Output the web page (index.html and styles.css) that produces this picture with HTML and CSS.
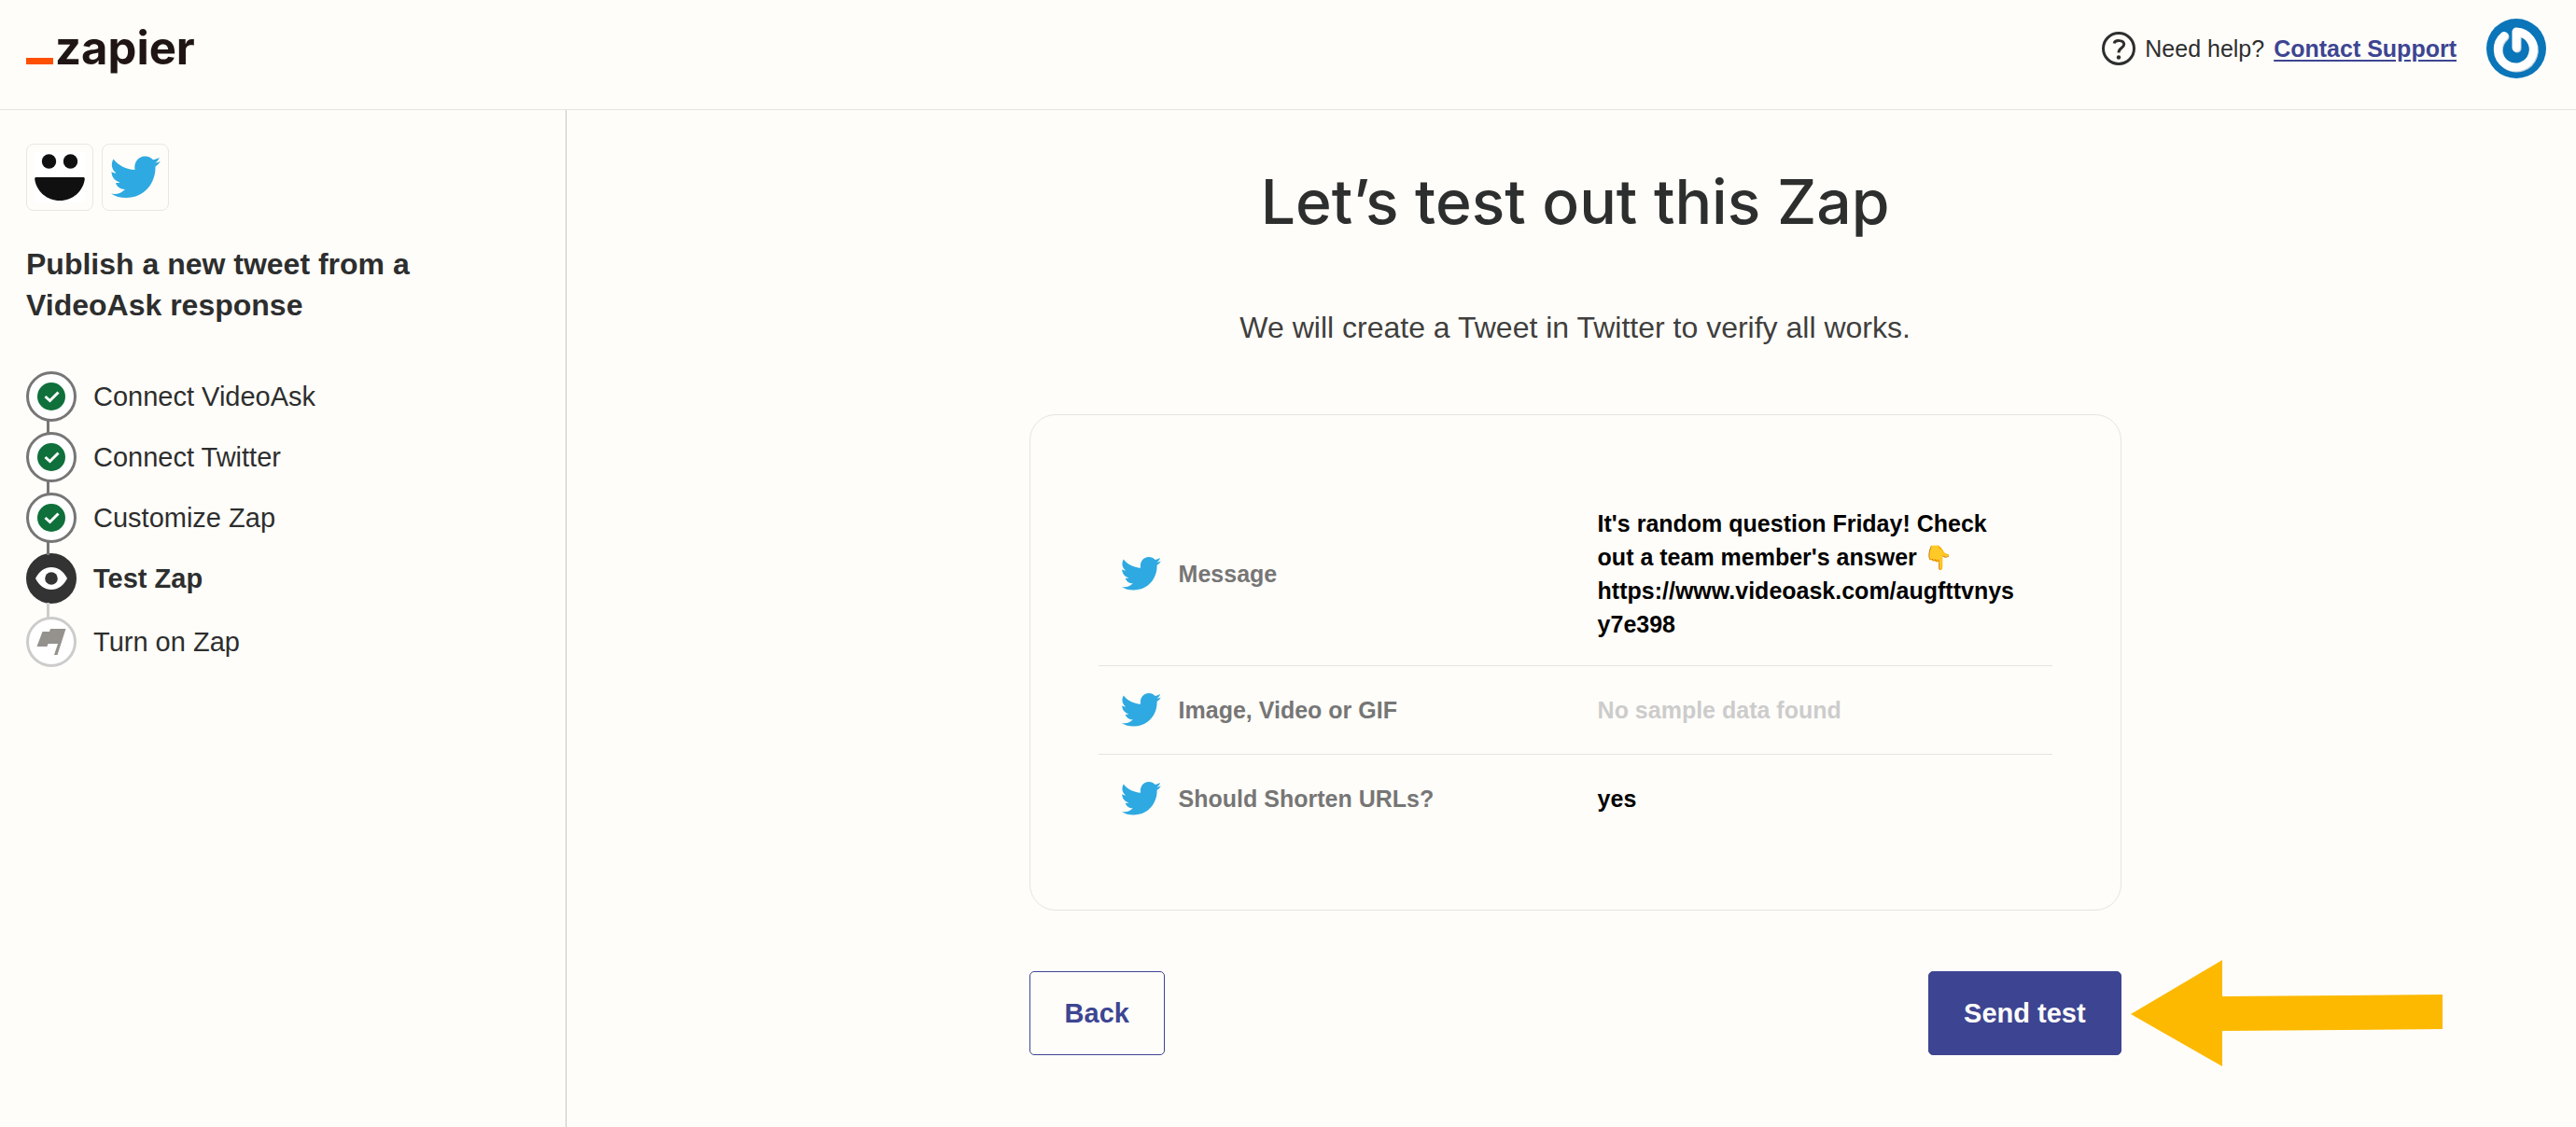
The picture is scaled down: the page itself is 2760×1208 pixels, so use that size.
FILE: index.html
```html
<!DOCTYPE html>
<html lang="en">
<head>
<meta charset="utf-8">
<title>Publish a new tweet from a VideoAsk response | Zapier</title>
<link rel="stylesheet" href="styles.css">
</head>
<body>
<svg class="sprite" aria-hidden="true">
  <symbol id="bird" viewBox="0 0 54 46">
    <path fill="#2fa9e1" d="M1 40.500C7 42 12 40 16 36C11 36 7 33 6 29C8 29.300 9.500 29 10.500 28.500C5 27 1.500 22.500 1.500 17C3 18 4.800 18.500 6.500 18.500C1.500 15 .5 8.500 3.500 3.500C9 10.500 17 14.500 26.500 15C25 7.500 30 .5 37.500 .5C41 .5 43.800 2 46 4.300C48.500 3.800 50.700 3 52.800 1.700C52 4.200 50.500 6.200 48.200 7.500C50.300 7.300 52 6.800 53.800 6C52.500 8.200 50.800 10 48.500 11.500C49 29 37 45 17 45C11 45 5.500 43.500 1 40.500Z"/>
  </symbol>
  <symbol id="check" viewBox="0 0 30 30">
    <circle cx="15" cy="15" r="15" fill="#0f703b"/>
    <path d="M8.500 15L13.500 19.500L22.500 10.500" fill="none" stroke="#fff" stroke-width="3"/>
  </symbol>
</svg>

<header class="topbar">
  <a class="logo" href="#" aria-label="Zapier"><span class="logo-bar"></span><span class="logo-word">zapier</span></a>
  <div class="help">
    <svg class="help-icon" viewBox="0 0 36 36" fill="none" stroke="#2d2e2e" stroke-width="3" aria-hidden="true">
      <circle cx="18" cy="18" r="16.500"/>
      <path d="M13.200 12.500C14 8.500 23.700 8.500 23.700 13.500C23.700 17.500 18 17 18 22.500"/>
      <circle cx="18" cy="27.500" r="2.200" fill="#2d2e2e" stroke="none"/>
    </svg>
    <span>Need help?</span>
    <a class="support" href="#">Contact Support</a>
  </div>
  <svg class="avatar" viewBox="0 0 64 64" role="img" aria-label="Account">
    <circle cx="32" cy="32" r="32" fill="#0a75b9"/>
    <path d="M19 18.500A19 19 0 1 0 32 14V31" fill="none" stroke="#c3d3de" stroke-width="9" stroke-linecap="round" stroke-linejoin="round" transform="translate(1 1)"/>
    <path d="M19 18.500A19 19 0 1 0 32 14V31" fill="none" stroke="#fff" stroke-width="9" stroke-linecap="round" stroke-linejoin="round"/>
  </svg>
</header>

<div class="layout">
  <aside class="sidebar">
    <div class="apps">
      <span class="app">
        <svg class="app-icon" viewBox="0 0 54 54" role="img" aria-label="VideoAsk">
          <path fill="#fff" d="M0 0H54V54H0Z"/>
          <circle cx="15.500" cy="10" r="7.700" fill="#101010"/><circle cx="38.500" cy="10" r="7.700" fill="#101010"/>
          <path fill="#101010" d="M1.500 27H52.500Q54 27 53.800 29C52 42 41 52 27 52S2 42 .2 29Q0 27 1.500 27Z"/>
        </svg>
      </span>
      <span class="app"><svg class="app-icon" role="img" aria-label="Twitter"><use href="#bird"/></svg></span>
    </div>
    <h2 class="zap-name">Publish a new tweet from a VideoAsk response</h2>
    <ol class="steps">
      <li class="step"><span class="dot"><svg class="check"><use href="#check"/></svg></span>Connect VideoAsk</li>
      <li class="step"><span class="dot"><svg class="check"><use href="#check"/></svg></span>Connect Twitter</li>
      <li class="step"><span class="dot"><svg class="check"><use href="#check"/></svg></span>Customize Zap</li>
      <li class="step current" aria-current="step"><span class="dot"><svg class="eye" viewBox="0 0 34 24"><path fill="#fff" d="M0 12C4 4 10 0 17 0S30 4 34 12C30 20 24 24 17 24S4 20 0 12Z"/><circle cx="17" cy="12" r="6.800" fill="#333"/></svg></span>Test Zap</li>
      <li class="step pending"><span class="dot"><svg class="flag" viewBox="0 0 30 28"><path fill="#95928e" d="M5.500 3H13L14 0H30.500L21.500 28H18L22 16H11.500L10.500 19H-.5Z"/></svg></span>Turn on Zap</li>
    </ol>
  </aside>

  <main class="main">
    <h1 class="title">Let’s test out this Zap</h1>
    <p class="lead">We will create a Tweet in Twitter to verify all works.</p>
    <section class="card">
      <table class="fields">
        <tr>
          <th scope="row"><span class="field"><svg class="bird" aria-hidden="true"><use href="#bird"/></svg>Message</span></th>
          <td>It's random question Friday! Check out a team member's answer 👇 https://www.videoask.com/augfttvnysy7e398</td>
        </tr>
        <tr>
          <th scope="row"><span class="field"><svg class="bird" aria-hidden="true"><use href="#bird"/></svg>Image, Video or GIF</span></th>
          <td class="empty">No sample data found</td>
        </tr>
        <tr>
          <th scope="row"><span class="field"><svg class="bird" aria-hidden="true"><use href="#bird"/></svg>Should Shorten URLs?</span></th>
          <td>yes</td>
        </tr>
      </table>
    </section>
    <div class="actions">
      <button class="btn btn-secondary" type="button">Back</button>
      <div class="send">
        <button class="btn btn-primary" type="button">Send test</button>
        <svg class="arrow" viewBox="0 0 334 114" aria-hidden="true"><path fill="#fcb900" d="M0 58L98 0V39L334 37V74L98 76V114Z"/></svg>
      </div>
    </div>
  </main>
</div>
</body>
</html>
```
FILE: styles.css
```css
* { box-sizing: border-box; }

body {
  margin: 0;
  min-height: 100vh;
  display: flex;
  flex-direction: column;
  background: #fffdf9;
  color: #2d2e2e;
  font-family: "Liberation Sans", Arial, sans-serif;
}

svg { display: block; }
.sprite { position: absolute; width: 0; height: 0; }

.topbar {
  display: flex;
  align-items: center;
  height: 118px;
  padding: 0 32px 14px 28px;
  border-bottom: 1px solid #e5e4e1;
}
.logo {
  display: flex;
  align-items: baseline;
  gap: 2px;
  margin-right: auto;
  color: #201515;
  text-decoration: none;
}
.logo-bar { width: 29px; height: 7px; background: #ff4f00; }
.logo-word { font: 700 49px/60px Inter, sans-serif; }
.help { display: flex; align-items: center; gap: 10px; font-size: 25px; line-height: 32px; }
.help-icon { width: 36px; height: 36px; }
.support { color: #3d4592; font-weight: 700; text-underline-offset: 3px; }
.avatar { width: 64px; height: 64px; margin-left: 32px; }

.layout { flex: 1; display: flex; }

.sidebar {
  flex: 0 0 22%;
  padding: 36px 28px;
  border-right: 1px solid #c8c7c5;
}
.apps { display: flex; gap: 9px; }
.app {
  display: flex;
  align-items: center;
  justify-content: center;
  width: 72px;
  height: 72px;
  border: 1px solid #e8e7e4;
  border-radius: 8px;
}
.app-icon { width: 54px; height: 54px; }
.zap-name { margin: 35px 0 49px; max-width: 480px; font-size: 32px; line-height: 44px; }

.steps { margin: 0; padding: 0; list-style: none; display: flex; flex-direction: column; gap: 11px; }
.step { position: relative; display: flex; align-items: center; gap: 18px; font-size: 29px; line-height: 40px; }
.step + .step::before {
  content: "";
  position: absolute;
  left: 22px;
  top: -12px;
  width: 3px;
  height: 14px;
  background: #767676;
}
.dot {
  display: flex;
  align-items: center;
  justify-content: center;
  width: 54px;
  height: 54px;
  border: 3px solid #767676;
  border-radius: 50%;
  background: #fff;
}
.check { width: 30px; height: 30px; }
.current { font-weight: 700; }
.current .dot { background: #333; border-color: #333; }
.eye { width: 34px; height: 24px; }
.step.pending { margin-top: 3px; }
.step.pending::before { top: -15px; height: 17px; background: #ccc; }
.pending .dot { border-color: #ccc; }
.flag { width: 30px; height: 28px; overflow: visible; }

.main {
  flex: 1;
  display: flex;
  flex-direction: column;
  align-items: center;
  padding: 56px 36px 76px 44px;
}
.title { margin: 0; font: 500 66px/84px Inter, sans-serif; }
.lead { margin: 72px 0; color: #403f3e; font-size: 32px; line-height: 42px; }
.card {
  width: 100%;
  max-width: 1170px;
  padding: 72px 73px;
  border: 1px solid #e5e4e1;
  border-radius: 28px;
}
.fields { width: 100%; border-collapse: collapse; table-layout: fixed; font-size: 25px; line-height: 36px; }
.fields tr + tr { border-top: 1px solid #e5e4e1; }
.fields th { width: 50%; padding: 26px 24px; color: #767676; text-align: left; }
.fields td { padding: 26px 28px 26px 24px; color: #000; font-weight: 700; overflow-wrap: anywhere; }
.fields .empty { color: #ccc; }
.field { display: flex; align-items: center; gap: 19px; }
.bird { width: 43px; height: 42px; }

.actions {
  display: flex;
  justify-content: space-between;
  width: 100%;
  max-width: 1170px;
  margin-top: 65px;
}
.btn {
  height: 90px;
  padding: 0 37px;
  border: 1px solid #3d4592;
  border-radius: 5px;
  font: 700 29px/40px "Liberation Sans", Arial, sans-serif;
}
.btn-secondary { background: transparent; color: #3d4592; }
.btn-primary { background: #3d4592; color: #fffdf9; }
.send { position: relative; }
.arrow { position: absolute; left: calc(100% + 10px); top: -12px; width: 334px; height: 114px; }
```
